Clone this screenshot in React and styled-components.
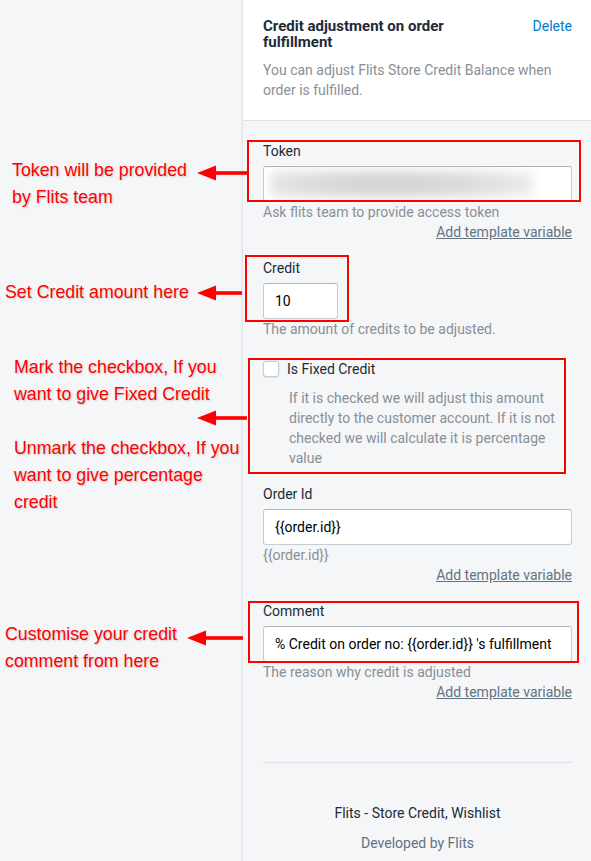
import React from 'react';
import styled, { createGlobalStyle } from 'styled-components';

const GlobalStyle = createGlobalStyle`
  html, body {
    margin: 0;
    padding: 0;
    background: #f4f6f8;
  }
  * {
    box-sizing: border-box;
  }
`;

const Page = styled.div`
  position: relative;
  display: flex;
  width: 591px;
  height: 861px;
  overflow: hidden;
  background: #f4f6f8;
  font-family: Roboto, "Liberation Sans", sans-serif;
`;

const Gutter = styled.div`
  width: 242px;
  flex-shrink: 0;
`;

const Panel = styled.div`
  flex: 1;
  border-left: 1px solid #e1e4e8;
  box-shadow: -1px 0 2px rgba(0, 0, 0, 0.04);
  display: flex;
  flex-direction: column;
`;

const Header = styled.div`
  background: #fff;
  padding: 18px 19px 20px 20px;
  border-bottom: 1px solid #dfe3e8;
`;

const TitleRow = styled.div`
  display: flex;
  justify-content: space-between;
  align-items: flex-start;
  gap: 20px;
`;

const Title = styled.h2`
  margin: 0;
  font-size: 15px;
  line-height: 16px;
  font-weight: 700;
  color: #212b36;
`;

const DeleteLink = styled.a`
  color: #007ace;
  font-size: 14px;
  line-height: 16px;
  text-decoration: none;
  white-space: nowrap;
`;

const Description = styled.p`
  margin: 10px 0 0;
  font-size: 14px;
  line-height: 20px;
  color: #8a8f96;
`;

const Body = styled.div`
  padding: 20px 19px 0 20px;
  display: flex;
  flex-direction: column;
`;

const Field = styled.div`
  display: flex;
  flex-direction: column;
  margin-bottom: ${(p) => p.$gap ?? 16}px;
`;

const Label = styled.label`
  font-size: 14px;
  line-height: 20px;
  color: #212b36;
  margin-bottom: 5px;
`;

const Input = styled.div`
  width: ${(p) => (p.$width ? `${p.$width}px` : '100%')};
  height: 36px;
  background: #fff;
  border: 1px solid #c4cdd5;
  border-top-color: #aeb4b9;
  border-radius: 3px;
  padding: 0 11px;
  display: flex;
  align-items: center;
  font-size: 14px;
  color: #000;
  white-space: nowrap;
  overflow: hidden;
`;

// the token value is hidden behind a blur in the screenshot
const Blur = styled.span`
  display: block;
  width: 262px;
  height: 30px;
  margin-left: -4px;
  background: radial-gradient(ellipse at 45% 50%, #cfcfcf 0%, #dcdcdc 45%, #f6f6f6 90%);
  filter: blur(5px);
`;

const Help = styled.div`
  font-size: 14px;
  line-height: 20px;
  color: #8a8f96;
`;

const TemplateLink = styled.a`
  align-self: flex-end;
  font-size: 14px;
  line-height: 20px;
  color: #637381;
  text-decoration: underline;
`;

const CheckRow = styled.div`
  display: flex;
  align-items: center;
  gap: 8px;
  height: 20px;
`;

const Checkbox = styled.span`
  width: 16px;
  height: 16px;
  border: 1px solid #c4cdd5;
  border-radius: 3px;
  background: #fff;
  box-shadow: 0 0 0 1px rgba(99, 115, 129, 0.05), 0 1px 0 rgba(22, 29, 37, 0.05);
`;

const CheckLabel = styled.span`
  font-size: 14px;
  color: #212b36;
`;

const CheckHelp = styled.p`
  margin: 9px 0 0 26px;
  font-size: 14px;
  line-height: 20px;
  color: #8a8f96;
`;

const Divider = styled.hr`
  border: 0;
  border-top: 1px solid #dfe3e8;
  margin: 60px 0 0;
`;

const Footer = styled.div`
  display: flex;
  flex-direction: column;
  align-items: center;
  gap: 10px;
  margin-top: 40px;
  font-size: 14px;
  line-height: 20px;
`;

const AppName = styled.div`
  color: #212b36;
`;

const Credit = styled.div`
  color: #637381;
`;

/* annotation overlay */

const Note = styled.div`
  position: absolute;
  left: ${(p) => p.$x}px;
  top: ${(p) => p.$y}px;
  font-family: "Liberation Sans", Arial, sans-serif;
  font-size: 17.8px;
  line-height: 27px;
  color: #ff0000;
  text-shadow: 1px 1px 2px rgba(0, 0, 0, 0.18);
  white-space: nowrap;
`;

const RedBox = styled.div`
  position: absolute;
  left: ${(p) => p.$x}px;
  top: ${(p) => p.$y}px;
  width: ${(p) => p.$w}px;
  height: ${(p) => p.$h}px;
  border: 2px solid #ff0000;
  pointer-events: none;
`;

const ArrowSvg = styled.svg`
  position: absolute;
  left: ${(p) => p.$x}px;
  top: ${(p) => p.$y - 8}px;
  overflow: visible;
`;

const Arrow = ({ x, y, len }) => (
  <ArrowSvg $x={x} $y={y} width={len} height={16}>
    <polygon points="0,8 19,0.5 19,15.5" fill="#ff0000" />
    <rect x="18" y="6.2" width={len - 18} height="3.6" fill="#ff0000" />
  </ArrowSvg>
);

const AddVar = () => <TemplateLink>Add template variable</TemplateLink>;

export default function App() {
  return (
    <>
      <GlobalStyle />
      <Page>
        <Gutter />
        <Panel>
          <Header>
            <TitleRow>
              <Title>Credit adjustment on order fulfillment</Title>
              <DeleteLink>Delete</DeleteLink>
            </TitleRow>
            <Description>
              You can adjust Flits Store Credit Balance when order is fulfilled.
            </Description>
          </Header>

          <Body>
            <Field>
              <Label>Token</Label>
              <Input>
                <Blur />
              </Input>
              <Help>Ask flits team to provide access token</Help>
              <AddVar />
            </Field>

            <Field $gap={20}>
              <Label>Credit</Label>
              <Input $width={75}>10</Input>
              <Help>The amount of credits to be adjusted.</Help>
            </Field>

            <Field>
              <CheckRow>
                <Checkbox />
                <CheckLabel>Is Fixed Credit</CheckLabel>
              </CheckRow>
              <CheckHelp>
                If it is checked we will adjust this amount directly to the customer account. If it
                is not checked we will calculate it is percentage value
              </CheckHelp>
            </Field>

            <Field>
              <Label>Order Id</Label>
              <Input>{'{{order.id}}'}</Input>
              <Help>{'{{order.id}}'}</Help>
              <AddVar />
            </Field>

            <Field $gap={0}>
              <Label>Comment</Label>
              <Input>{"% Credit on order no: {{order.id}} 's fulfillment"}</Input>
              <Help>The reason why credit is adjusted</Help>
              <AddVar />
            </Field>

            <Divider />

            <Footer>
              <AppName>Flits - Store Credit, Wishlist</AppName>
              <Credit>Developed by Flits</Credit>
            </Footer>
          </Body>
        </Panel>

        <RedBox $x={247} $y={140} $w={334} $h={62} />
        <RedBox $x={245} $y={255} $w={104} $h={67} />
        <RedBox $x={248} $y={358} $w={318} $h={116} />
        <RedBox $x={248} $y={601} $w={331} $h={62} />

        <Arrow x={197} y={172.5} len={50} />
        <Arrow x={197} y={292.7} len={45} />
        <Arrow x={197} y={417.7} len={50} />
        <Arrow x={187} y={638} len={56} />

        <Note $x={12} $y={157}>
          Token will be provided
          <br />
          by Flits team
        </Note>
        <Note $x={5} $y={279}>
          Set Credit amount here
        </Note>
        <Note $x={14} $y={354}>
          Mark the checkbox, If you
          <br />
          want to give Fixed Credit
          <br />
          <br />
          Unmark the checkbox, If you
          <br />
          want to give percentage
          <br />
          credit
        </Note>
        <Note $x={5} $y={621}>
          Customise your credit
          <br />
          comment from here
        </Note>
      </Page>
    </>
  );
}
